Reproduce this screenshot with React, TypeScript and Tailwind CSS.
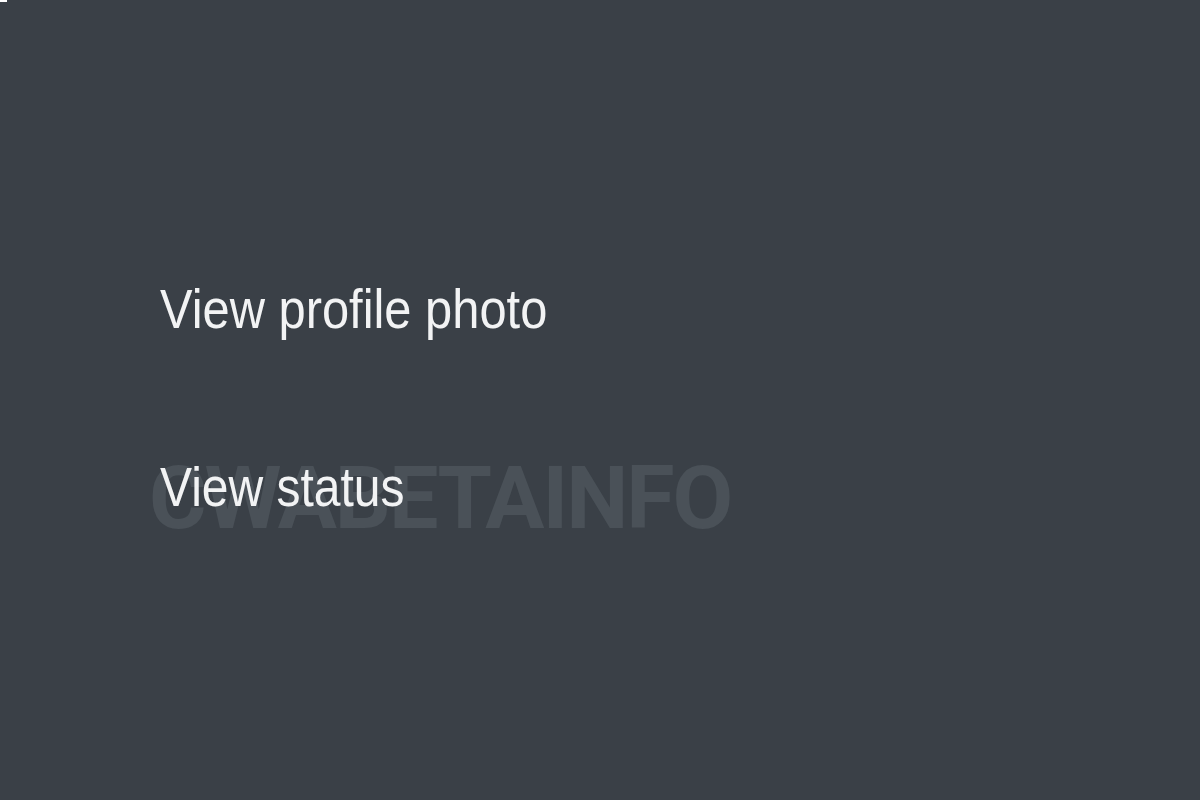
export default function App() {
  return (
    <div className="relative h-[800px] w-full overflow-hidden bg-[#3a4047]">
      {/* tiny white mark top-left */}
      <div className="h-[2px] w-[7px] bg-white" />

      <div className="flex flex-col pl-[160px] pt-[275px] gap-[114px]">
        <div className="origin-left scale-x-[0.872] text-[56px] leading-[64px] text-[#f2f3f4] whitespace-nowrap font-['Liberation_Sans',Arial,sans-serif]">
          View profile photo
        </div>

        <div className="relative">
          {/* watermark */}
          <div
            aria-hidden="true"
            className="pointer-events-none absolute -top-px left-[-11px] select-none whitespace-nowrap text-[88px] font-bold leading-[88px] tracking-[-2px] text-[#4a5158] font-['Roboto',sans-serif]"
          >
            CWABETAINFO
          </div>
          <div className="relative origin-left scale-x-[0.857] text-[56px] leading-[64px] text-[#f2f3f4] whitespace-nowrap font-['Liberation_Sans',Arial,sans-serif]">
            View status
          </div>
        </div>
      </div>
    </div>
  );
}
